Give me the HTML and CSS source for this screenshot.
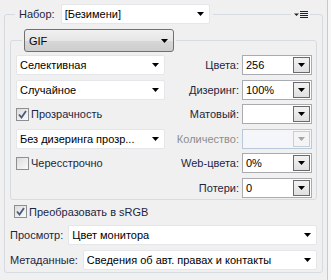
FILE: index.html
```html
<!DOCTYPE html>
<html lang="ru">

<head>
    <meta charset="UTF-8">
    <meta name="viewport" content="width=device-width,initial-scale=1.0">
    <title>Сохранить для Web</title>
    <link rel="stylesheet" href="styles.css">
</head>

<body>
    <div class="frame">
        <fieldset class="panel">
            <legend class="panel-head">
                <span class="label">Набор:</span>
                <div class="select preset">
                    <span class="value">[Безимени]</span>
                    <svg class="arrow" width="7" height="4" viewBox="0 0 7 4"><polygon points="0,0 7,0 3.5,4" /></svg>
                </div>
            </legend>
            <!-- panel menu sits over the group border -->
            <span class="panel-menu">
                <svg width="16" height="8" viewBox="0 0 16 8">
                    <polygon points="1,2.5 6,2.5 3.5,5" />
                    <rect x="7" y="0" width="8" height="1" />
                    <rect x="7" y="2" width="8" height="1" />
                    <rect x="7" y="4" width="8" height="1" />
                    <rect x="7" y="6" width="8" height="1" />
                </svg>
            </span>

            <fieldset class="format">
                <legend class="format-head">
                    <div class="format-btn">
                        <span class="value">GIF</span>
                        <svg class="arrow" width="7" height="4" viewBox="0 0 7 4"><polygon points="0,0 7,0 3.5,4" /></svg>
                    </div>
                </legend>

                <div class="settings">
                    <div class="select">
                        <span class="value">Селективная</span>
                        <svg class="arrow" width="7" height="4" viewBox="0 0 7 4"><polygon points="0,0 7,0 3.5,4" /></svg>
                    </div>
                    <span class="label right">Цвета:</span>
                    <div class="combo">
                        <span class="value">256</span>
                        <span class="combo-btn"><svg width="7" height="4" viewBox="0 0 7 4"><polygon points="0,0 7,0 3.5,4" /></svg></span>
                    </div>

                    <div class="select">
                        <span class="value">Случайное</span>
                        <svg class="arrow" width="7" height="4" viewBox="0 0 7 4"><polygon points="0,0 7,0 3.5,4" /></svg>
                    </div>
                    <span class="label right">Дизеринг:</span>
                    <div class="combo">
                        <span class="value">100%</span>
                        <span class="combo-btn"><svg width="7" height="4" viewBox="0 0 7 4"><polygon points="0,0 7,0 3.5,4" /></svg></span>
                    </div>

                    <label class="check">
                        <span class="box checked">
                            <svg width="9" height="9" viewBox="0 0 9 9"><path d="M1 4.5 L3.5 7.5 L8 1" /></svg>
                        </span>
                        <span class="label">Прозрачность</span>
                    </label>
                    <span class="label right">Матовый:</span>
                    <div class="combo">
                        <span class="value"></span>
                        <span class="combo-btn"><svg width="7" height="4" viewBox="0 0 7 4"><polygon points="0,0 7,0 3.5,4" /></svg></span>
                    </div>

                    <div class="select">
                        <span class="value">Без дизеринга прозр...</span>
                        <svg class="arrow" width="7" height="4" viewBox="0 0 7 4"><polygon points="0,0 7,0 3.5,4" /></svg>
                    </div>
                    <span class="label right disabled">Количество:</span>
                    <div class="combo disabled">
                        <span class="value"></span>
                        <span class="combo-btn"><svg width="7" height="4" viewBox="0 0 7 4"><polygon points="0,0 7,0 3.5,4" /></svg></span>
                    </div>

                    <label class="check">
                        <span class="box"></span>
                        <span class="label">Чересстрочно</span>
                    </label>
                    <span class="label right">Web-цвета:</span>
                    <div class="combo">
                        <span class="value">0%</span>
                        <span class="combo-btn"><svg width="7" height="4" viewBox="0 0 7 4"><polygon points="0,0 7,0 3.5,4" /></svg></span>
                    </div>

                    <span></span>
                    <span class="label right">Потери:</span>
                    <div class="combo">
                        <span class="value">0</span>
                        <span class="combo-btn"><svg width="7" height="4" viewBox="0 0 7 4"><polygon points="0,0 7,0 3.5,4" /></svg></span>
                    </div>
                </div>
            </fieldset>

            <label class="check convert">
                <span class="box checked">
                    <svg width="9" height="9" viewBox="0 0 9 9"><path d="M1 4.5 L3.5 7.5 L8 1" /></svg>
                </span>
                <span class="label">Преобразовать в sRGB</span>
            </label>

            <div class="row preview">
                <span class="label">Просмотр:</span>
                <div class="select">
                    <span class="value">Цвет монитора</span>
                    <svg class="arrow" width="7" height="4" viewBox="0 0 7 4"><polygon points="0,0 7,0 3.5,4" /></svg>
                </div>
            </div>

            <div class="row meta">
                <span class="label">Метаданные:</span>
                <div class="select">
                    <span class="value">Сведения об авт. правах и контакты</span>
                    <svg class="arrow" width="7" height="4" viewBox="0 0 7 4"><polygon points="0,0 7,0 3.5,4" /></svg>
                </div>
            </div>
        </fieldset>
    </div>
</body>

</html>
```

FILE: styles.css
```css
/* Save for Web - optimize panel */
* {
    padding: 0;
    margin: 0;
    box-sizing: border-box;
    font-family: "Liberation Sans", Arial, sans-serif;
    font-size: 11px;
}

body {
    background: #f7f7f7;
}

.frame {
    width: 328px;
    height: 280px;
    background: #f0f0f0;
    border-right: 1px solid #c9c9c9;
    padding: 4px 0 0 4px;
}

.label {
    color: #1e2640;
    white-space: nowrap;
}

.value {
    color: #000;
    white-space: nowrap;
    overflow: hidden;
}

/* group boxes */
.panel,
.format {
    border: 1px solid #d5dbe1;
    border-radius: 3px;
    min-width: 0;
}

.panel {
    position: relative;
    width: 319px;
    padding: 5px 5px 2px 5px;
}

.panel-head {
    display: flex;
    align-items: center;
    height: 20px;
    margin-left: 5px;
    padding: 0 3px 0 4px;
}

.panel-head .label {
    margin-right: 6px;
}

.preset {
    width: 149px;
}

.panel-menu {
    position: absolute;
    top: -14px;
    right: 12px;
    width: 19px;
    height: 10px;
    padding: 1px 0 0 2px;
    background: #f0f0f0;
    display: flex;
}

.panel-menu svg {
    fill: #222;
}

/* format box */
.format {
    padding: 3px 4px 1px 5px;
}

.format-head {
    margin-left: 6px;
    padding: 0 2px;
}

.format-btn {
    display: flex;
    align-items: center;
    width: 150px;
    height: 23px;
    padding: 0 5px 0 4px;
    border: 1px solid #707070;
    border-radius: 3px;
    background: linear-gradient(#f0f0f0, #e6e6e6 50%, #d8d8d8 51%, #cdcdcd);
}

.format-btn .value {
    flex: 1;
}

.settings {
    display: grid;
    grid-template-columns: 149px 1fr 70px;
    grid-template-rows: repeat(6, 20px);
    column-gap: 3px;
    row-gap: 4.5px;
    align-items: center;
}

.right {
    text-align: right;
}

.label.disabled {
    color: #8d8d8d;
}

/* drop down list */
.select {
    display: flex;
    align-items: center;
    height: 20px;
    padding: 0 5px 0 3px;
    background: #fff;
    border: 1px solid #e4e6ea;
    border-radius: 2px;
}

.select .value {
    flex: 1;
}

.arrow {
    flex: none;
    fill: #000;
}

/* combo box with button */
.combo {
    display: flex;
    height: 20px;
    background: #fff;
    border: 1px solid #a9abb0;
}

.combo .value {
    flex: 1;
    padding-left: 3px;
    line-height: 18px;
}

.combo-btn {
    width: 17px;
    margin: 1px;
    display: grid;
    place-items: center;
    background: linear-gradient(#f2f2f2, #e0e0e0);
    border: 1px solid #6a6a6a;
}

.combo-btn svg {
    fill: #000;
}

.combo.disabled {
    background: #f4f6f9;
    border-color: #b9c9dc;
}

.combo.disabled .combo-btn {
    background: #f4f4f4;
    border-color: #c6ced8;
}

.combo.disabled .combo-btn svg {
    fill: #a5a5a5;
}

/* check boxes */
.check {
    display: flex;
    align-items: center;
    gap: 2px;
    height: 20px;
}

.box {
    width: 13px;
    height: 13px;
    display: grid;
    place-items: center;
    border: 1px solid #8e8f8f;
    background: linear-gradient(135deg, #dcdcdc, #fbfbfb);
}

.box svg {
    fill: none;
    stroke: #4a5a7a;
    stroke-width: 1.8;
}

.convert {
    margin: 2px 0 0 4px;
}

/* bottom rows */
.row {
    display: flex;
    align-items: center;
    gap: 5px;
}

.row .select {
    flex: 1;
}

.preview {
    margin-top: 3px;
}

.meta {
    margin-top: 5px;
}
```
